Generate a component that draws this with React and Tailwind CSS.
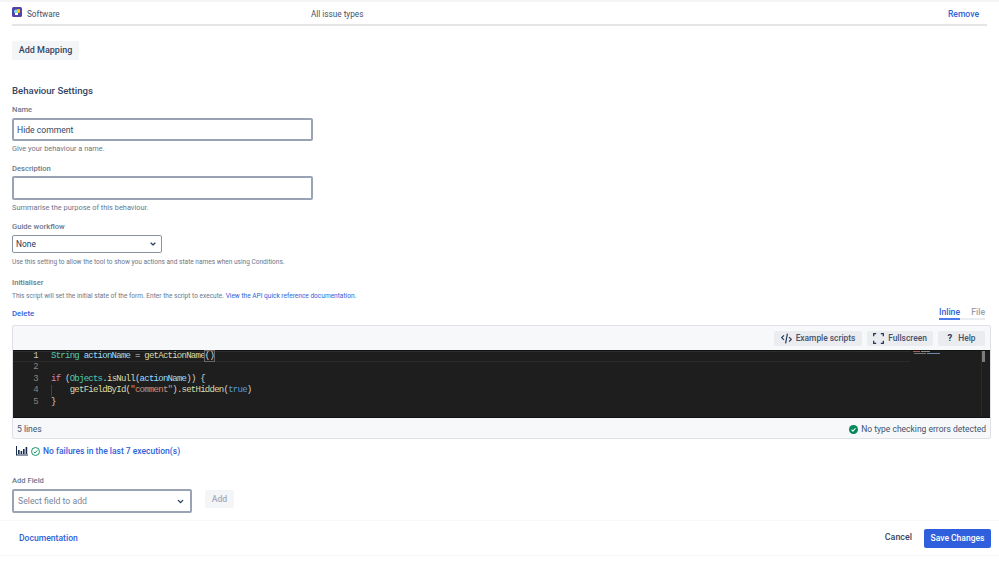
import { ChevronDown } from "lucide-react";

function Label({ children, className = "" }) {
  return <div className={`text-[7.6px] leading-[12px] font-medium text-[#6b778c] ${className}`}>{children}</div>;
}

function Helper({ children, className = "" }) {
  return <div className={`leading-[12px] text-[#6b778c] ${className}`}>{children}</div>;
}

function ToolButton({ icon, children, className = "" }) {
  return (
    <button className={`h-[15px] rounded-[2px] bg-[#ebecf0] flex items-center justify-center gap-[4px] whitespace-nowrap text-[8.4px] font-medium text-[#42526e] ${className}`}>
      {icon}
      {children}
    </button>
  );
}

function CodeLine({ num, active, children }) {
  return (
    <div className={`flex h-[11.4px] items-center ${active ? "w-[897px] border-y border-[#2c2c2c]" : ""}`}>
      <span className={`w-[25px] text-right ${active ? "text-[#c6c6c6]" : "text-[#858585]"}`}>{num}</span>
      <span className="ml-[13px] whitespace-pre text-[#d4d4d4]">{children}</span>
    </div>
  );
}

export default function App() {
  return (
    <div className="w-[999px] h-[561px] overflow-hidden bg-white font-['Roboto',sans-serif] antialiased text-[#42526e]">
      <div className="h-[2px] bg-[#f4f5f7]" />

      {/* MAPPING ROW */}
      <div className="mx-3 h-[24px] border-b-2 border-[#e4e5e7] flex items-center text-[8.2px] pt-[2px]">
        <div className="w-[15px] flex items-center -mt-[5px]">
          <svg width="10" height="10" viewBox="0 0 10 10">
            <rect width="10" height="10" rx="1.5" fill="#5243aa" />
            <circle cx="4" cy="4.5" r="2" fill="#79e2f2" />
            <rect x="5" y="2" width="3" height="4" rx="1" fill="#ffc400" />
            <rect x="3" y="6" width="3" height="2" fill="#ffffff" />
          </svg>
        </div>
        <span className="w-[284px]">Software</span>
        <span className="flex-1">All issue types</span>
        <span className="text-[8.6px] font-medium text-[#2f62d9] mr-[8px]">Remove</span>
      </div>

      <div className="px-3">
        <button className="mt-[15px] h-[19px] w-[67px] rounded-[2px] bg-[#f4f5f7] text-[9px] font-medium text-[#344563]">Add Mapping</button>

        <h2 className="mt-[24px] text-[9.6px] leading-[14px] font-medium text-[#344563]">Behaviour Settings</h2>

        <Label className="mt-[6px]">Name</Label>
        <input readOnly value="Hide comment" className="mt-[2px] block w-[301px] h-[23px] rounded-[2px] border-2 border-[#9aa3b3] px-[3px] pt-[1px] text-[8.6px] text-[#344563] outline-none" />
        <Helper className="mt-[2px] text-[7.4px]">Give your behaviour a name.</Helper>

        <Label className="mt-[8px]">Description</Label>
        <input readOnly className="mt-[1px] block w-[301px] h-[24px] rounded-[2px] border-2 border-[#9aa3b3] outline-none" />
        <Helper className="mt-[2px] text-[7.4px]">Summarise the purpose of this behaviour.</Helper>

        <Label className="mt-[7px]">Guide workflow</Label>
        <div className="mt-[2px] w-[150px] h-[18px] rounded-[2px] border border-[#8993a4] flex items-center justify-between px-[3px] text-[8.4px] text-[#253858]">
          None
          <ChevronDown size={8} strokeWidth={3.5} className="mr-[1px] text-[#253858]" />
        </div>
        <Helper className="mt-[3px] text-[6.55px]">Use this setting to allow the tool to show you actions and state names when using Conditions.</Helper>

        <Label className="mt-[9px]">Initialiser</Label>
        <Helper className="mt-[1px] text-[6.55px]">
          This script will set the initial state of the form. Enter the script to execute. <span className="text-[#2f62d9]">View the API quick reference documentation.</span>
        </Helper>

        <div className="mt-[5px] h-[13px] flex items-start justify-between">
          <span className="text-[7.8px] leading-[13px] font-medium text-[#2f62d9]">Delete</span>
          <div className="flex text-[8.6px] font-medium mr-[2px] -mt-[1px] mb-[-1px]">
            <div className="w-[21px] h-[14px] text-center leading-[13px] text-[#2f62d9] border-b-2 border-[#4c7bed]">Inline</div>
            <div className="w-[25px] h-[14px] text-right leading-[13px] text-[#97a0af] border-b-2 border-[#ebecf0]">File</div>
          </div>
        </div>

        {/* EDITOR */}
        <div className="mt-[5px] w-[979px] h-[114px] rounded-[2px] border border-[#dfe1e6] bg-[#f7f8f9] flex flex-col">
          <div className="h-[24px] flex items-center justify-end gap-[5px] pr-[5px]">
            <ToolButton className="w-[88px]" icon={
              <svg width="11" height="11" viewBox="0 0 12 12" fill="none" stroke="#253858" strokeWidth="1.3">
                <path d="M3.2 2.5 L0.8 5 L3.2 7.5 M8.8 4.5 L11.2 7 L8.8 9.5 M7 0.8 L5 11.2" />
              </svg>
            }>Example scripts</ToolButton>
            <ToolButton className="w-[66px]" icon={
              <svg width="11" height="11" viewBox="0 0 11 11" fill="none" stroke="#253858" strokeWidth="1.3">
                <path d="M0.7 3.2 V0.7 H3.2 M7.8 0.7 H10.3 V3.2 M10.3 7.8 V10.3 H7.8 M3.2 10.3 H0.7 V7.8" />
              </svg>
            }>Fullscreen</ToolButton>
            <ToolButton className="w-[47px] gap-[6px]" icon={<span className="text-[9.5px] font-bold text-[#253858]">?</span>}>Help</ToolButton>
          </div>

          <div className="relative h-[68px] bg-[#1e1e1e] border-y border-black/40 font-['Liberation_Mono',monospace] text-[9px] tracking-[-0.74px]">
            <CodeLine num="1" active>
              <span className="text-[#4ec9b0]">String</span> <span className="text-[#9cdcfe]">actionName</span> = <span className="text-[#dcdcaa]">getActionName</span><span className="outline-1 outline-[#666]">()</span>
            </CodeLine>
            <CodeLine num="2"> </CodeLine>
            <CodeLine num="3">
              <span className="text-[#c586c0]">if</span> (<span className="text-[#4ec9b0]">Objects</span>.<span className="text-[#dcdcaa]">isNull</span>(<span className="text-[#9cdcfe]">actionName</span>)) {"{"}
            </CodeLine>
            <CodeLine num="4">
              {"    "}<span className="text-[#dcdcaa]">getFieldById</span>(<span className="text-[#ce9178]">"comment"</span>).<span className="text-[#dcdcaa]">setHidden</span>(<span className="text-[#569cd6]">true</span>)
            </CodeLine>
            <CodeLine num="5">{"}"}</CodeLine>

            {/* indent guide */}
            <div className="absolute left-[38px] top-[34px] h-[11px] w-px bg-[#404040]" />

            {/* minimap */}
            <div className="absolute left-[900px] top-0 flex flex-col gap-[1px]">
              <div className="flex gap-[1px]">
                <div className="h-[1px] w-[7px] bg-[#a85a5a]" />
                <div className="h-[1px] w-[9px] bg-[#8a8a8a]" />
              </div>
              <div className="flex gap-[1px] ml-[1px]">
                <div className="h-[1px] w-[12px] bg-[#777777]" />
                <div className="h-[1px] w-[13px] bg-[#6f8aa8]" />
              </div>
            </div>
            <div className="absolute right-[5px] top-0 w-[4px] h-[11px] bg-[#7c7c7c]" />
            <div className="absolute right-[8px] top-0 bottom-0 w-px bg-[#2a2a2a]" />
          </div>

          <div className="flex-1 flex items-center justify-between px-[4px] pt-[2px] text-[8.5px]">
            <span>5 lines</span>
            <span className="flex items-center gap-[3px]">
              <svg width="9" height="9" viewBox="0 0 10 10">
                <circle cx="5" cy="5" r="5" fill="#00875a" />
                <path d="M2.8 5.2 L4.4 6.8 L7.2 3.6" stroke="#fff" strokeWidth="1.2" fill="none" />
              </svg>
              No type checking errors detected
            </span>
          </div>
        </div>

        {/* EXECUTIONS */}
        <div className="mt-[5px] ml-[4px] h-[14px] flex items-center text-[8.5px] font-medium text-[#2f62d9]">
          <svg width="12" height="10" viewBox="0 0 12 10" fill="#172b4d">
            <rect x="0" y="0" width="1" height="9" />
            <rect x="0" y="8.5" width="12" height="1" />
            <rect x="2" y="4" width="1.6" height="4" />
            <rect x="4.6" y="5" width="1.6" height="3" />
            <rect x="7" y="3" width="1.6" height="5" />
            <rect x="9.6" y="1" width="1.6" height="7" />
          </svg>
          <svg className="ml-[3px]" width="9" height="9" viewBox="0 0 10 10" fill="none" stroke="#00875a" strokeWidth="1">
            <circle cx="5" cy="5" r="4.4" />
            <path d="M2.9 5.2 L4.4 6.7 L7.2 3.6" />
          </svg>
          <span className="ml-[3px]">No failures in the last 7 execution(s)</span>
        </div>

        <Label className="mt-[17px]">Add Field</Label>
        <div className="mt-[2px] flex items-start">
          <div className="w-[180px] h-[24px] rounded-[2px] border-2 border-[#9aa3b3] flex items-center justify-between pl-[4px] pr-[5px] text-[8.7px] text-[#7a869a]">
            <span className="pt-[1px]">Select field to add</span>
            <ChevronDown size={9} strokeWidth={3.5} className="text-[#253858]" />
          </div>
          <button className="ml-[13px] mt-[1px] w-[29px] h-[18px] rounded-[2px] bg-[#f4f5f7] pt-[1px] text-[8.7px] font-medium text-[#a5adba]">Add</button>
        </div>
      </div>

      {/* FOOTER */}
      <div className="mt-[7px] h-[36px] border-y border-[#f7f8f9] px-[8px] flex items-center justify-between">
        <span className="pl-[11px] pt-[1px] text-[8.6px] font-medium text-[#2f62d9]">Documentation</span>
        <div className="flex items-center gap-[12px]">
          <span className="text-[8.9px] font-medium text-[#344563]">Cancel</span>
          <button className="w-[67px] h-[19px] rounded-[2px] bg-[#2f5fdc] text-[8.5px] font-medium text-white">Save Changes</button>
        </div>
      </div>
    </div>
  );
}
